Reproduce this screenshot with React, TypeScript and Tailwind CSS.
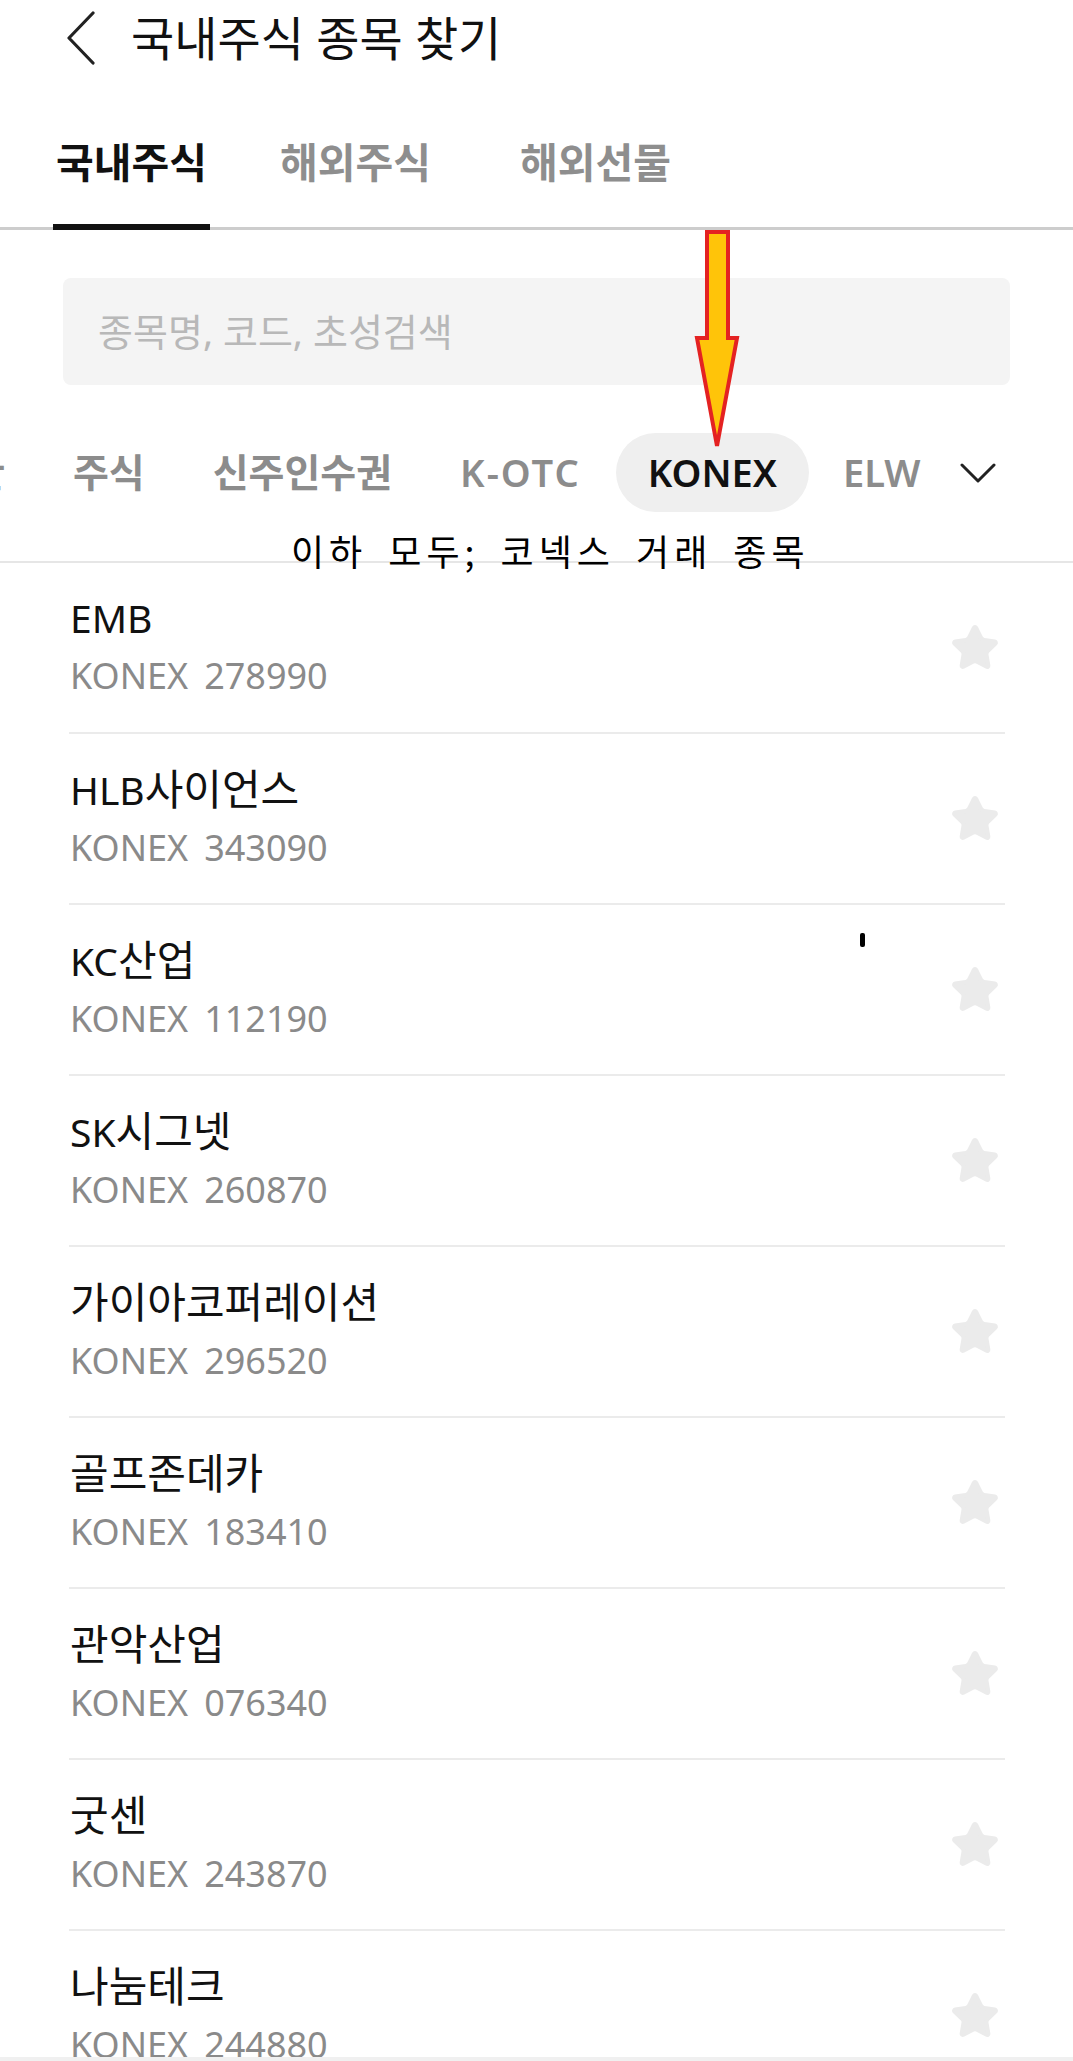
import React from 'react';

const FONT = "font-['Noto_Sans','Noto_Sans_CJK_KR',sans-serif]";

interface Stock {
  name: string;
  code: string;
}

const stocks: Stock[] = [
  { name: 'EMB', code: '278990' },
  { name: 'HLB사이언스', code: '343090' },
  { name: 'KC산업', code: '112190' },
  { name: 'SK시그넷', code: '260870' },
  { name: '가이아코퍼레이션', code: '296520' },
  { name: '골프존데카', code: '183410' },
  { name: '관악산업', code: '076340' },
  { name: '굿센', code: '243870' },
  { name: '나눔테크', code: '244880' },
];

const chips = [
  { label: '한', cls: 'text-[39px] px-[33px]' },
  { label: '주식', cls: 'text-[39px] px-[33px]' },
  { label: '신주인수권', cls: 'text-[39px] px-[33px]' },
  { label: 'K-OTC', cls: 'text-[38px] tracking-[2px] px-[33px]' },
  { label: 'KONEX', cls: 'text-[38px] px-[32px]', active: true },
  { label: 'ELW', cls: 'text-[38px] px-[32px]' },
];

const splitName = (name: string) =>
  name.split(/([가-힣]+)/).filter(Boolean).map((part, i) =>
    /[가-힣]/.test(part) ? (
      <span key={i} className="text-[42px]">{part}</span>
    ) : (
      <span key={i}>{part}</span>
    )
  );

const StarIcon: React.FC = () => (
  <svg width="50" height="50" viewBox="0 0 24 24" fill="#ebebeb" stroke="#ebebeb" strokeWidth="2" strokeLinejoin="round">
    <path d="M11.525 2.295a.53.53 0 0 1 .95 0l2.31 4.679a2.123 2.123 0 0 0 1.595 1.16l5.166.756a.53.53 0 0 1 .294.904l-3.736 3.638a2.123 2.123 0 0 0-.611 1.878l.882 5.14a.53.53 0 0 1-.771.56l-4.618-2.428a2.122 2.122 0 0 0-1.973 0L6.396 21.01a.53.53 0 0 1-.77-.56l.881-5.139a2.122 2.122 0 0 0-.611-1.879L2.16 9.795a.53.53 0 0 1 .294-.906l5.165-.755a2.122 2.122 0 0 0 1.597-1.16z" />
  </svg>
);

const StockRow: React.FC<{ stock: Stock }> = ({ stock }) => (
  <div className="ml-[69px] w-[936px] h-[171px] shrink-0 border-b-2 border-[#ebebeb] flex justify-between">
    <div className="pl-[1px] pt-[29px]">
      <div className="text-[39px] leading-[52px] text-[#111] whitespace-nowrap">{splitName(stock.name)}</div>
      <div className="text-[36px] leading-[64px] text-[#8a8a8a]">
        <span>KONEX</span>
        <span className="ml-[16px]">{stock.code}</span>
      </div>
    </div>
    <div className="self-center pr-[5px]">
      <StarIcon />
    </div>
  </div>
);

export default function App() {
  return (
    <div className={`relative w-full h-[2061px] overflow-hidden bg-white ${FONT}`}>
      {/* header */}
      <div className="h-[75px] flex items-center pl-[65px]">
        <svg width="32" height="54" viewBox="0 0 32 54" fill="none" stroke="#222" strokeWidth="3.2" strokeLinecap="round" strokeLinejoin="round">
          <path d="M28 2 L4 27 L28 52" />
        </svg>
        <span className="ml-[34px] text-[47px] leading-[60px] text-[#111]">국내주식 종목 찾기</span>
      </div>

      {/* market tabs */}
      <div className="h-[155px] flex border-b-[3px] border-[#cdcdcd]">
        <div className="relative h-full ml-[53px] w-[157px] pt-[62px] text-center text-[41px] leading-[50px] font-semibold text-[#111] whitespace-nowrap">
          국내주식
          <div className="absolute left-0 right-0 bottom-[-3px] h-[6px] bg-[#111]" />
        </div>
        <div className="h-full ml-[67px] w-[157px] pt-[62px] text-center text-[41px] leading-[50px] font-semibold text-[#8e8e8e] whitespace-nowrap">
          해외주식
        </div>
        <div className="h-full ml-[83px] w-[157px] pt-[62px] text-center text-[41px] leading-[50px] font-semibold text-[#8e8e8e] whitespace-nowrap">
          해외선물
        </div>
      </div>

      {/* search */}
      <div className="mt-[48px] ml-[63px] w-[947px] h-[107px] rounded-[8px] bg-[#f4f4f4] flex items-center pl-[35px]">
        <span className="text-[38px] text-[#b8b8b8]">종목명, 코드, 초성검색</span>
      </div>

      {/* category chips */}
      <div className="pt-[48px] pb-[49px] border-b-2 border-[#e6e6e6] flex items-center overflow-hidden">
        <div className="flex items-center gap-[2px] -ml-[64px] shrink-0">
          {chips.map((c) => (
            <div
              key={c.label}
              className={`h-[79px] rounded-full flex items-center font-semibold ${c.cls} ${
                c.active ? 'bg-[#efefef] text-[#111]' : 'text-[#8c8c8c]'
              }`}
            >
              {c.label}
            </div>
          ))}
        </div>
        <svg className="ml-[8px] shrink-0" width="36" height="22" viewBox="0 0 36 22" fill="none" stroke="#222" strokeWidth="3" strokeLinecap="round" strokeLinejoin="round">
          <path d="M2 3 L18 19 L34 3" />
        </svg>
      </div>

      {/* stock list */}
      <div className="flex flex-col">
        {stocks.map((s) => (
          <StockRow key={s.code} stock={s} />
        ))}
      </div>

      {/* annotation overlay */}
      <div className="absolute left-[291px] top-[525px] text-[36px] leading-[50px] tracking-[5px] [word-spacing:8px] text-black whitespace-nowrap font-['Noto_Sans_CJK_KR',sans-serif]">
        이하 모두; 코넥스 거래 종목
      </div>
      <svg className="absolute left-[690px] top-[228px]" width="54" height="225" viewBox="0 0 54 225">
        <polygon points="17,4 38,4 38,110 47,110 27,218 7,110 17,110" fill="#ffc409" stroke="#e42222" strokeWidth="4" strokeLinejoin="miter" />
      </svg>
      <div className="absolute left-[860px] top-[933px] w-[5px] h-[14px] rounded-[2px] bg-black" />

      <div className="absolute left-0 right-0 bottom-0 h-[4px] bg-[#f0f0f0]" />
    </div>
  );
}
